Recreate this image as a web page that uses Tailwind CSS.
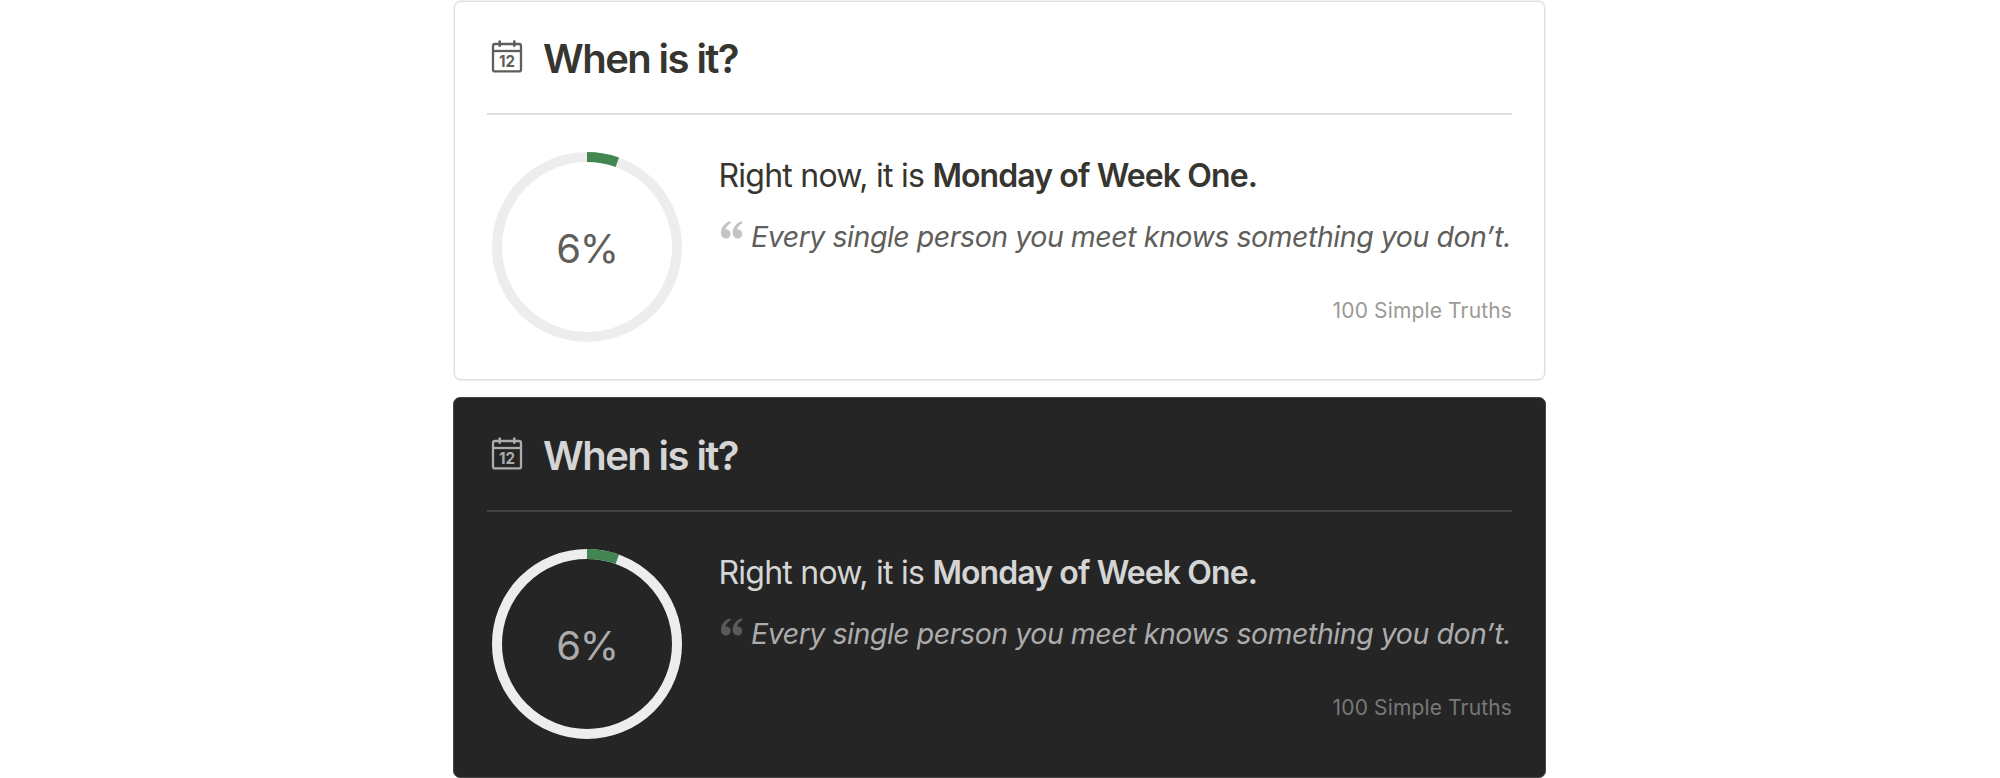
<!DOCTYPE html>
<html lang="en">
<head>
<meta charset="utf-8">
<title>When is it?</title>
<script src="https://cdn.jsdelivr.net/npm/@tailwindcss/browser@4"></script>
</head>
<body class="bg-white font-[Inter,sans-serif]">
<main class="ml-[454px] flex w-[1091px] flex-col gap-[17px] pt-px">

  <section class="h-[379px] rounded-[7px] border border-[#dedede] bg-white px-8 text-[#37352f] shadow-[0_0_0_1px_#f1f1f1]">
    <header class="flex h-[113px] border-b-2 border-[#dfe0df] pl-1">
      <svg class="mt-[38px] h-[34px] w-8 shrink-0 text-[#5f5e5b]" viewBox="0 0 32 34" fill="none" stroke="currentColor" stroke-width="2.3">
        <rect x="2" y="4" width="28" height="27.4" rx="2"/>
        <path d="M2 11h28"/>
        <path d="M8.7 1.5v4.2M23.3 1.5v4.2" stroke-width="2.6" stroke-linecap="round"/>
        <text x="8" y="27.2" font-size="16.5" font-weight="700" textLength="16" lengthAdjust="spacingAndGlyphs" fill="currentColor" stroke="none">12</text>
      </svg>
      <h2 class="mt-[33px] ml-[20px] text-[40px] leading-[48px] font-semibold tracking-[-1.58px]">When is it?</h2>
    </header>
    <div class="flex pl-[5px]">
      <div class="mt-[37px] grid size-[190px] shrink-0 place-items-center">
        <svg class="col-start-1 row-start-1 size-[190px]" viewBox="0 0 190 190" fill="none" stroke-width="10">
          <circle cx="95" cy="95" r="90" stroke="#ededed"/>
          <path d="M95 5A90 90 0 0 1 125.3 10.26" stroke="#448652"/>
        </svg>
        <span class="col-start-1 row-start-1 pt-[3px] text-[40px] leading-[48px] tracking-[-1.2px] text-[#5f5e5b]">6%</span>
      </div>
      <div class="ml-[36.5px] flex flex-1 flex-col">
        <p class="mt-[37px] text-[32px] leading-[48px] tracking-[-0.76px] whitespace-nowrap">Right now, it is <strong class="font-semibold tracking-[-0.9px]">Monday of Week One.</strong></p>
        <div class="mt-[17px] flex pl-[2.5px]">
          <svg class="mt-1 h-[18px] w-[22px] shrink-0 text-[#c4c4c3]" viewBox="0 0 22 18" fill="currentColor">
            <path d="M8.7 0.2C3.8 2 0 6.3 0 11.6C0 15.1 1.9 17.4 4.9 17.4C7.5 17.4 9.6 15.5 9.6 12.9C9.6 10.3 7.8 8.5 5.3 8.5H4.5C5.2 5.7 7.3 3.5 10 2Z"/>
            <path transform="translate(11.6)" d="M8.7 0.2C3.8 2 0 6.3 0 11.6C0 15.1 1.9 17.4 4.9 17.4C7.5 17.4 9.6 15.5 9.6 12.9C9.6 10.3 7.8 8.5 5.3 8.5H4.5C5.2 5.7 7.3 3.5 10 2Z"/>
          </svg>
          <q class="ml-2 text-[28.5px] leading-10 tracking-[-0.46px] whitespace-nowrap text-[#5f5e5b] italic [quotes:none]">Every single person you meet knows something you don’t.</q>
        </div>
        <p class="mt-[38px] text-right text-[21px] leading-8 tracking-[0.14px] text-[#9b9a97]">100 Simple Truths</p>
      </div>
    </div>
  </section>

  <section class="-mx-px h-[381px] rounded-[7px] border border-[#484848] bg-[#252525] px-[33px] pt-px text-[#d5d5d5]">
    <header class="flex h-[113px] border-b-2 border-[#424342] pl-1">
      <svg class="mt-[38px] h-[34px] w-8 shrink-0 text-[#acacac]" viewBox="0 0 32 34" fill="none" stroke="currentColor" stroke-width="2.3">
        <rect x="2" y="4" width="28" height="27.4" rx="2"/>
        <path d="M2 11h28"/>
        <path d="M8.7 1.5v4.2M23.3 1.5v4.2" stroke-width="2.6" stroke-linecap="round"/>
        <text x="8" y="27.2" font-size="16.5" font-weight="700" textLength="16" lengthAdjust="spacingAndGlyphs" fill="currentColor" stroke="none">12</text>
      </svg>
      <h2 class="mt-[33px] ml-[20px] text-[40px] leading-[48px] font-semibold tracking-[-1.58px]">When is it?</h2>
    </header>
    <div class="flex pl-[5px]">
      <div class="mt-[37px] grid size-[190px] shrink-0 place-items-center">
        <svg class="col-start-1 row-start-1 size-[190px]" viewBox="0 0 190 190" fill="none" stroke-width="10">
          <circle cx="95" cy="95" r="90" stroke="#ededed"/>
          <path d="M95 5A90 90 0 0 1 125.3 10.26" stroke="#448652"/>
        </svg>
        <span class="col-start-1 row-start-1 pt-[3px] text-[40px] leading-[48px] tracking-[-1.2px] text-[#acacac]">6%</span>
      </div>
      <div class="ml-[36.5px] flex flex-1 flex-col">
        <p class="mt-[37px] text-[32px] leading-[48px] tracking-[-0.76px] whitespace-nowrap">Right now, it is <strong class="font-semibold tracking-[-0.9px]">Monday of Week One.</strong></p>
        <div class="mt-[17px] flex pl-[2.5px]">
          <svg class="mt-1 h-[18px] w-[22px] shrink-0 text-[#5a5a5a]" viewBox="0 0 22 18" fill="currentColor">
            <path d="M8.7 0.2C3.8 2 0 6.3 0 11.6C0 15.1 1.9 17.4 4.9 17.4C7.5 17.4 9.6 15.5 9.6 12.9C9.6 10.3 7.8 8.5 5.3 8.5H4.5C5.2 5.7 7.3 3.5 10 2Z"/>
            <path transform="translate(11.6)" d="M8.7 0.2C3.8 2 0 6.3 0 11.6C0 15.1 1.9 17.4 4.9 17.4C7.5 17.4 9.6 15.5 9.6 12.9C9.6 10.3 7.8 8.5 5.3 8.5H4.5C5.2 5.7 7.3 3.5 10 2Z"/>
          </svg>
          <q class="ml-2 text-[28.5px] leading-10 tracking-[-0.46px] whitespace-nowrap text-[#acacac] italic [quotes:none]">Every single person you meet knows something you don’t.</q>
        </div>
        <p class="mt-[38px] text-right text-[21px] leading-8 tracking-[0.14px] text-[#787878]">100 Simple Truths</p>
      </div>
    </div>
  </section>
</main>
</body>
</html>
